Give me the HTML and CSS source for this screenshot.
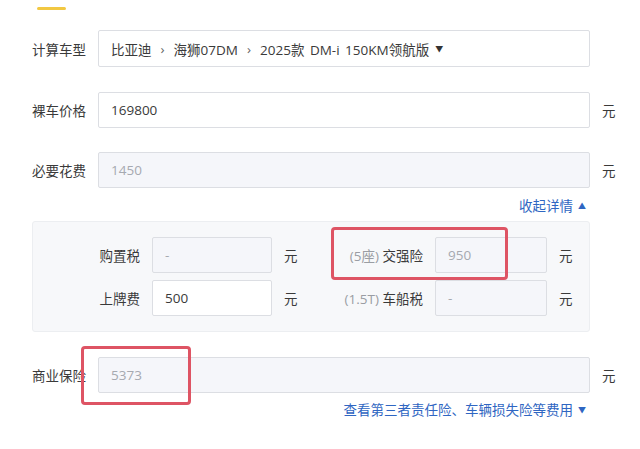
FILE: index.html
```html
<!DOCTYPE html>
<html lang="zh-CN">
<head>
  <meta charset="UTF-8" />
  <title>购车计算器</title>
  <link rel="stylesheet" href="styles.css">
</head>
<body>

  <div class="calc">
    <div class="tab-mark"></div>

    <div class="row row-model">
      <span class="row-label">计算车型</span>
      <div class="field select">
        比亚迪<span class="sep">›</span>海狮07DM<span class="sep">›</span>2025款 DM-i 150KM领航版<span class="caret">▼</span>
      </div>
    </div>

    <div class="row row-price">
      <span class="row-label">裸车价格</span>
      <div class="field">169800</div>
      <span class="unit">元</span>
    </div>

    <div class="row row-must">
      <span class="row-label">必要花费</span>
      <div class="field disabled">1450</div>
      <span class="unit">元</span>
    </div>

    <div class="more"><a href="#">收起详情<span class="tri">▲</span></a></div>

    <div class="detail">
      <span class="d-label">购置税</span>
      <div class="field small disabled">-</div>
      <span class="unit">元</span>
      <span class="d-label"><em>(5座)</em> 交强险</span>
      <div class="field small disabled">950</div>
      <span class="unit">元</span>

      <span class="d-label">上牌费</span>
      <div class="field small">500</div>
      <span class="unit">元</span>
      <span class="d-label"><em>(1.5T)</em> 车船税</span>
      <div class="field small disabled">-</div>
      <span class="unit">元</span>

      <div class="mark mark-jq"></div>
    </div>

    <div class="row row-biz">
      <span class="row-label">商业保险</span>
      <div class="field disabled">5373</div>
      <span class="unit">元</span>
      <div class="mark mark-biz"></div>
    </div>

    <div class="more more-biz"><a href="#">查看第三者责任险、车辆损失险等费用<span class="tri">▼</span></a></div>
  </div>

</body>
</html>
```

FILE: styles.css
```css
/* Base */
body {
  margin: 0;
  background: #fff;
  font-family: 'Open Sans', 'Noto Sans CJK SC', sans-serif;
  font-size: 13.5px;
  color: #3a3a3a;
}
a {
  text-decoration: none;
  color: inherit;
}

.calc {
  width: 608px;
  padding: 7px 0 0 32px;
}

/* Tab underline at the top */
.tab-mark {
  width: 29px;
  height: 3px;
  margin-left: 5px;
  background: #f2c842;
  border-radius: 2px;
}

/* Form rows */
.row {
  display: flex;
  align-items: center;
  position: relative;
}
.row-model { margin-top: 20px; }
.row-price { margin-top: 25px; }
.row-must { margin-top: 24px; }
.row-biz { margin-top: 25px; }

.row-label {
  width: 66px;
  flex: none;
  white-space: nowrap;
  color: #3a3a3a;
}

.field {
  box-sizing: border-box;
  width: 492px;
  height: 36px;
  padding: 0 12px;
  display: flex;
  align-items: center;
  border: 1px solid #dcdee3;
  border-radius: 2px;
  background: #fff;
  color: #3a3a3a;
  white-space: nowrap;
}
.field.disabled {
  background: #f5f6fa;
  color: #a6a9b0;
}
.select {
  height: 37px;
  word-spacing: 2px;
}
.select .sep {
  margin: 0 9px;
  color: #666;
}
.select .caret {
  font-size: 8px;
  margin-left: 6px;
  color: #333;
}

.unit {
  margin-left: 12px;
  color: #3a3a3a;
}

/* Links */
.more {
  width: 558px;
  height: 33px;
  display: flex;
  align-items: center;
  justify-content: flex-end;
  padding-right: 4px;
  box-sizing: border-box;
}
.more a {
  color: #2f66c2;
}
.more .tri {
  font-size: 8px;
  margin-left: 5px;
  vertical-align: 2px;
}
.more-biz {
  height: 32px;
}

/* Detail panel */
.detail {
  position: relative;
  box-sizing: border-box;
  width: 558px;
  padding: 15px 0;
  display: grid;
  grid-template-columns: 107px 120px 14px 113px 112px 14px;
  grid-auto-rows: 36px;
  column-gap: 12px;
  row-gap: 7px;
  align-items: center;
  background: #f7f8fa;
  border: 1px solid #eceef1;
  border-radius: 3px;
}
.detail .unit {
  margin-left: 0;
}
.d-label {
  text-align: right;
  white-space: nowrap;
  color: #3a3a3a;
}
.d-label em {
  font-style: normal;
  color: #9a9da3;
}
.field.small {
  width: auto;
  height: 36px;
}

/* Red annotation frames */
.mark {
  position: absolute;
  box-sizing: border-box;
  border: 3px solid #de5464;
  border-radius: 4px;
}
.mark-jq {
  left: 298px;
  top: 5px;
  width: 177px;
  height: 53px;
}
.mark-biz {
  left: 49px;
  top: -11px;
  width: 110px;
  height: 59px;
}
```
